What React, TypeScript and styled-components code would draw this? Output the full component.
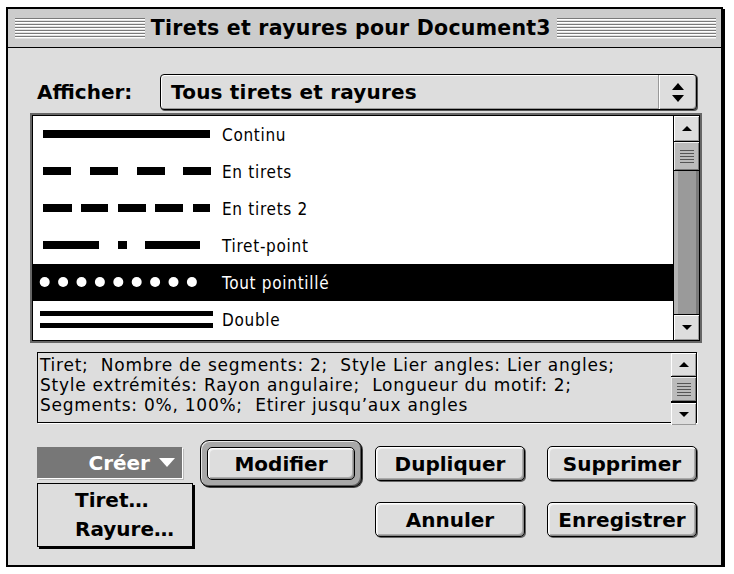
import React from "react";
import styled, { createGlobalStyle } from "styled-components";

const GlobalStyle = createGlobalStyle`
  html, body {
    margin: 0;
    padding: 0;
    background: #fff;
  }
`;

const systemFont = `"DejaVu Sans", "Liberation Sans", sans-serif`;
const smallFont = `"DejaVu Sans Condensed", "DejaVu Sans", sans-serif`;

const Window = styled.div`
  box-sizing: border-box;
  margin: 7px 0 0 6px;
  width: 717px;
  border: 2px solid #000;
  box-shadow: 2px 2px 0 #000;
  background: #dddddd;
  font-family: ${systemFont};
`;

const TitleBar = styled.div`
  height: 38px;
  display: flex;
  align-items: center;
  gap: 6px;
  padding: 0 5px 0 7px;
  background: #cccccc;
  border-bottom: 1px solid #000;
`;

const Stripes = styled.div<{ $grow: number }>`
  flex: ${(p) => p.$grow} 1 0;
  min-width: 40px;
  height: 21px;
  background-image: linear-gradient(
    to bottom,
    #7a7a7a 0,
    #7a7a7a 1px,
    #ffffff 1px,
    #ffffff 2px,
    #e2e2e2 2px,
    #e2e2e2 3px
  );
  background-size: 100% 3px;
  background-repeat: repeat-y;
`;

const Title = styled.div`
  flex: none;
  font-weight: bold;
  font-size: 20.5px;
  letter-spacing: 0.25px;
  color: #000;
  white-space: nowrap;
`;

const Body = styled.div`
  padding: 26px 0 28px 0;
`;

const PopupRow = styled.div`
  display: flex;
  align-items: center;
  height: 36px;
  padding-left: 29px;
`;

const PopupLabel = styled.div`
  width: 123px;
  font-weight: bold;
  font-size: 20px;
`;

const Popup = styled.div`
  box-sizing: border-box;
  display: flex;
  width: 537px;
  height: 36px;
  border: 1px solid #000;
  border-radius: 4px;
  background: #dddddd;
  box-shadow: inset 1px 1px 0 #fff, inset -1px -1px 0 #999, 1px 1px 0 #555;
`;

const PopupText = styled.div`
  flex: 1;
  display: flex;
  align-items: center;
  padding-left: 10px;
  font-weight: bold;
  font-size: 20px;
  letter-spacing: 0.2px;
`;

const PopupArrows = styled.div`
  width: 37px;
  display: flex;
  align-items: center;
  justify-content: center;
  border-left: 1px solid #999;
  box-shadow: inset 1px 0 0 #fff;
`;

const ListFrame = styled.div`
  box-sizing: border-box;
  margin: 3px 0 0 22px;
  width: 672px;
  height: 230px;
  padding: 2px;
  background: #666;
`;

const ListInner = styled.div`
  box-sizing: border-box;
  height: 100%;
  display: flex;
  border: 1px solid #000;
  background: #fff;
`;

const Rows = styled.div`
  flex: 1;
`;

const Row = styled.div<{ $selected?: boolean }>`
  height: 37px;
  display: flex;
  align-items: center;
  gap: 7px;
  padding-left: 4px;
  background: ${(p) => (p.$selected ? "#000" : "#fff")};
  color: ${(p) => (p.$selected ? "#fff" : "#000")};
  font-family: ${smallFont};
  font-size: 17px;
  letter-spacing: 0.7px;
`;

const ScrollBar = styled.div<{ $bordered?: boolean }>`
  box-sizing: border-box;
  width: 26px;
  display: flex;
  flex-direction: column;
  border-left: 1px solid #000;
  ${(p) => (p.$bordered ? "border: 1px solid #000; border-left: none;" : "")}
`;

const ArrowBox = styled.div<{ $h: number; $down?: boolean }>`
  height: ${(p) => p.$h}px;
  flex: none;
  display: flex;
  align-items: center;
  justify-content: center;
  background: #dddddd;
  box-shadow: inset 1px 1px 0 #fff, inset -1px -1px 0 #999;
  ${(p) => (p.$down ? "border-top: 1px solid #000;" : "border-bottom: 1px solid #000;")}
`;

const Thumb = styled.div<{ $h: number }>`
  height: ${(p) => p.$h}px;
  flex: none;
  display: flex;
  align-items: center;
  justify-content: center;
  background: #bbbbbb;
  box-shadow: inset 1px 1px 0 #eee, inset -1px -1px 0 #777;
  border-bottom: 1px solid #000;
`;

const Track = styled.div`
  flex: 1;
  background: linear-gradient(
    to right,
    #b4b4b4 0 4px,
    #9a9a9a 4px calc(100% - 3px),
    #7a7a7a calc(100% - 3px)
  );
`;

const InfoRow = styled.div`
  display: flex;
  margin: 9px 0 0 29px;
  width: 660px;
  height: 71px;
  box-shadow: 1px 1px 0 #fff;
`;

const InfoText = styled.div`
  flex: 1;
  box-sizing: border-box;
  border: 1px solid #000;
  border-right: none;
  padding: 2px 2px 0;
  overflow: hidden;
  font-family: ${systemFont};
  font-size: 17px;
  letter-spacing: 0.75px;
  line-height: 20px;
  white-space: pre;
`;

const ButtonGrid = styled.div`
  display: grid;
  grid-template-columns: 163px 175px 172px 150px;
  grid-template-rows: 47px 35px;
  row-gap: 15px;
  margin: 17px 0 0 29px;
`;

const PushButton = styled.div<{ $col: number; $row: number }>`
  grid-column: ${(p) => p.$col};
  grid-row: ${(p) => p.$row};
  align-self: center;
  box-sizing: border-box;
  width: 150px;
  height: 35px;
  display: flex;
  align-items: center;
  justify-content: center;
  border: 1px solid #000;
  border-radius: 5px;
  background: #dddddd;
  box-shadow: inset 1px 1px 0 #fff, inset 2px 2px 0 #f0f0f0,
    inset -1px -1px 0 #888, inset -2px -2px 0 #aaa, 1px 1px 0 #666;
  font-weight: bold;
  font-size: 20px;
`;

const DefaultRing = styled.div`
  grid-column: 2;
  grid-row: 1;
  box-sizing: border-box;
  width: 162px;
  height: 47px;
  padding: 6px;
  border: 1px solid #000;
  border-radius: 9px;
  background: #a8a8a8;
  box-shadow: inset 1px 1px 0 #e8e8e8, inset -1px -1px 0 #555, 1px 1px 0 #444;
`;

const DefaultButton = styled(PushButton)`
  width: 100%;
  height: 100%;
  box-shadow: inset 1px 1px 0 #fff, inset 2px 2px 0 #f0f0f0,
    inset -1px -1px 0 #888, inset -2px -2px 0 #aaa;
`;

const CreateCell = styled.div`
  grid-column: 1;
  grid-row: 1;
  position: relative;
  padding-top: 7px;
`;

const CreateButton = styled.div`
  box-sizing: border-box;
  width: 145px;
  height: 31px;
  display: flex;
  align-items: center;
  justify-content: flex-end;
  gap: 9px;
  padding-right: 7px;
  background: #777;
  color: #fff;
  box-shadow: 1px 1px 0 #fff, 2px 2px 0 #bbb;
  font-weight: bold;
  font-size: 20px;
`;

const Menu = styled.div`
  position: absolute;
  top: 43px;
  left: 0;
  box-sizing: border-box;
  width: 156px;
  height: 64px;
  padding: 3px 0 0 37px;
  border: 1px solid #000;
  background: #dddddd;
  box-shadow: 2px 2px 0 #000;
  z-index: 2;
`;

const MenuItem = styled.div`
  height: 29px;
  line-height: 27px;
  font-weight: bold;
  font-size: 20px;
`;

type LineKind = "solid" | "dash" | "dash2" | "dashdot" | "dots" | "double";

interface LineStyle {
  kind: LineKind;
  label: string;
}

const lineStyles: LineStyle[] = [
  { kind: "solid", label: "Continu" },
  { kind: "dash", label: "En tirets" },
  { kind: "dash2", label: "En tirets 2" },
  { kind: "dashdot", label: "Tiret-point" },
  { kind: "dots", label: "Tout pointillé" },
  { kind: "double", label: "Double" },
];

const segments: Record<string, [number, number][]> = {
  solid: [[6, 173]],
  dash: [[6, 34], [53, 81], [100, 128], [146, 174]],
  dash2: [[6, 35], [44, 71], [81, 109], [118, 146], [156, 173]],
  dashdot: [[6, 62], [81, 90], [108, 163]],
};

const LineSample: React.FC<{ kind: LineKind; color: string }> = ({ kind, color }) => {
  let shapes: React.ReactNode = null;
  if (kind === "dots") {
    shapes = Array.from({ length: 9 }, (_, i) => (
      <circle key={i} cx={7.7 + i * 18.4} cy={18} r={5} fill={color} />
    ));
  } else if (kind === "double") {
    shapes = (
      <>
        <rect x={3} y={10} width={173} height={5} fill={color} />
        <rect x={3} y={22} width={173} height={5} fill={color} />
      </>
    );
  } else {
    shapes = segments[kind].map(([a, b], i) => (
      <rect key={i} x={a} y={14} width={b - a} height={8} fill={color} />
    ));
  }
  return (
    <svg width={178} height={37} viewBox="0 0 178 37">
      {shapes}
    </svg>
  );
};

const Triangle: React.FC<{ down?: boolean; w?: number; h?: number }> = ({ down, w = 10, h = 5 }) => (
  <svg width={w} height={h} viewBox={`0 0 ${w} ${h}`}>
    <polygon points={down ? `0,0 ${w},0 ${w / 2},${h}` : `0,${h} ${w},${h} ${w / 2},0`} fill="#000" />
  </svg>
);

const Grip: React.FC = () => (
  <svg width={14} height={13} viewBox="0 0 14 13">
    {[0, 3, 6, 9, 12].map((y) => (
      <rect key={y} x={0} y={y} width={14} height={1} fill="#555" />
    ))}
  </svg>
);

const PopupArrowsIcon: React.FC = () => (
  <svg width={12} height={19} viewBox="0 0 12 19">
    <polygon points="0,7 12,7 6,0" fill="#000" />
    <polygon points="0,12 12,12 6,19" fill="#000" />
  </svg>
);

const info = [
  "Tiret;  Nombre de segments: 2;  Style Lier angles: Lier angles;",
  "Style extrémités: Rayon angulaire;  Longueur du motif: 2;",
  "Segments: 0%, 100%;  Etirer jusqu’aux angles",
];

const App: React.FC = () => {
  return (
    <>
      <GlobalStyle />
      <Window>
        <TitleBar>
          <Stripes $grow={133} />
          <Title>Tirets et rayures pour Document3</Title>
          <Stripes $grow={163} />
        </TitleBar>
        <Body>
          <PopupRow>
            <PopupLabel>Afficher:</PopupLabel>
            <Popup>
              <PopupText>Tous tirets et rayures</PopupText>
              <PopupArrows>
                <PopupArrowsIcon />
              </PopupArrows>
            </Popup>
          </PopupRow>

          <ListFrame>
            <ListInner>
              <Rows>
                {lineStyles.map((s) => {
                  const selected = s.kind === "dots";
                  return (
                    <Row key={s.kind} $selected={selected}>
                      <LineSample kind={s.kind} color={selected ? "#fff" : "#000"} />
                      <span>{s.label}</span>
                    </Row>
                  );
                })}
              </Rows>
              <ScrollBar>
                <ArrowBox $h={25}>
                  <Triangle />
                </ArrowBox>
                <Thumb $h={28}>
                  <Grip />
                </Thumb>
                <Track />
                <ArrowBox $h={25} $down>
                  <Triangle down />
                </ArrowBox>
              </ScrollBar>
            </ListInner>
          </ListFrame>

          <InfoRow>
            <InfoText>{info.join("\n")}</InfoText>
            <ScrollBar $bordered>
              <ArrowBox $h={23}>
                <Triangle />
              </ArrowBox>
              <Thumb $h={24}>
                <Grip />
              </Thumb>
              <Track />
              <ArrowBox $h={22} $down>
                <Triangle down />
              </ArrowBox>
            </ScrollBar>
          </InfoRow>

          <ButtonGrid>
            <CreateCell>
              <CreateButton>
                <span>Créer</span>
                <svg width={16} height={9} viewBox="0 0 16 9">
                  <polygon points="0,0 16,0 8,9" fill="#fff" />
                </svg>
              </CreateButton>
              <Menu>
                <MenuItem>Tiret…</MenuItem>
                <MenuItem>Rayure…</MenuItem>
              </Menu>
            </CreateCell>
            <DefaultRing>
              <DefaultButton $col={1} $row={1}>Modifier</DefaultButton>
            </DefaultRing>
            <PushButton $col={3} $row={1}>Dupliquer</PushButton>
            <PushButton $col={4} $row={1}>Supprimer</PushButton>
            <PushButton $col={3} $row={2}>Annuler</PushButton>
            <PushButton $col={4} $row={2}>Enregistrer</PushButton>
          </ButtonGrid>
        </Body>
      </Window>
    </>
  );
};

export default App;
